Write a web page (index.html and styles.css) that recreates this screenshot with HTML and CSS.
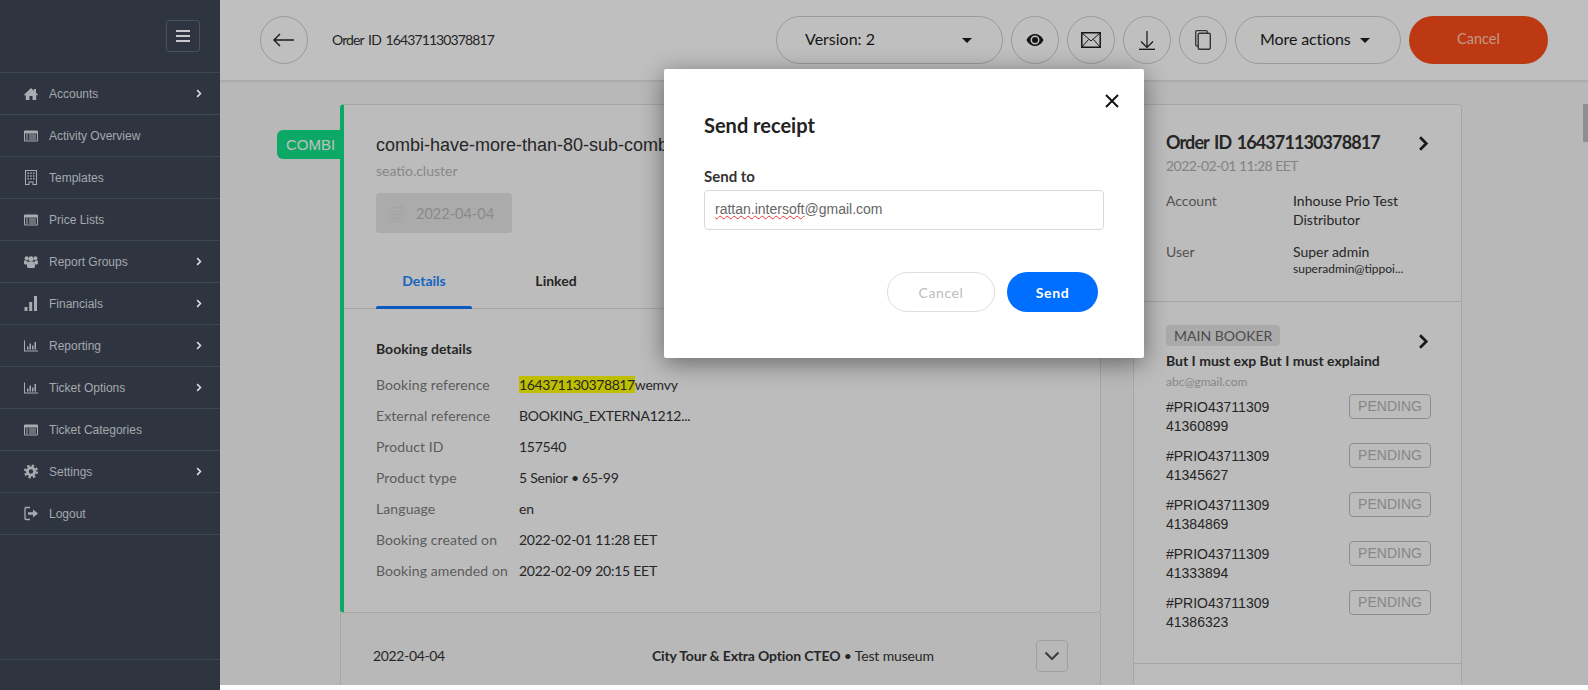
FILE: index.html
```html
<!DOCTYPE html>
<html lang="en">
<head>
  <meta charset="UTF-8" />
  <title>Order 164371130378817</title>
  <link rel="stylesheet" href="styles.css">
</head>
<body>
  <svg class="defs" width="0" height="0">
    <symbol id="i-list" viewBox="0 0 14 11"><path fill-rule="evenodd" d="M1 0h12a1 1 0 0 1 1 1v9a1 1 0 0 1-1 1H1a1 1 0 0 1-1-1V1a1 1 0 0 1 1-1zM1 3v7h12V3zM2 4h2v1H2zm3 0h7v1H5zM2 6h2v1H2zm3 0h7v1H5zM2 8h2v1H2zm3 0h7v1H5z"/></symbol>
    <symbol id="i-bars" viewBox="0 0 14 11"><path d="M0 0h1v10h13v1H0zM3 6h1.500v3H3zM5.500 3H7v6H5.500zM8 5h1.500v4H8zM10.500 1.500H12V9h-1.500z"/></symbol>
    <symbol id="i-chev" viewBox="0 0 8 12"><path d="M1.500 1.500 6 6l-4.500 4.500" fill="none" stroke="currentColor" stroke-width="2"/></symbol>
  </svg>

  <aside class="sidebar">
    <div class="side-top">
      <button class="burger"><span></span><span></span><span></span></button>
    </div>
    <nav class="side-nav">
      <a class="side-item"><svg class="side-icon" viewBox="0 0 14 12"><path d="M7 0l3 2.800V1h2v3.700l2 1.800-1 1-.8-.7V12H8.500V8h-3v4H1.800V7.100l-.8.700-1-1z"/></svg>Accounts<svg class="side-chev"><use href="#i-chev"/></svg></a>
      <a class="side-item"><svg class="side-icon"><use href="#i-list"/></svg>Activity Overview</a>
      <a class="side-item"><svg class="side-icon tall" viewBox="0 0 12 15"><path fill-rule="evenodd" d="M0 0h12v15H7.500v-2.500h-3V15H0zM1 1v13h2.500v-2.500h5V14H11V1zM2.500 2.500h1.500V4H2.500zm2.700 0h1.500V4H5.200zm2.800 0h1.500V4H8zM2.500 5.200h1.500v1.500H2.500zm2.700 0h1.500v1.500H5.200zm2.800 0h1.500v1.500H8zM2.500 8h1.500v1.500H2.500zM5.200 8h1.500v1.500H5.200zM8 8h1.500v1.500H8z"/></svg>Templates</a>
      <a class="side-item"><svg class="side-icon"><use href="#i-list"/></svg>Price Lists</a>
      <a class="side-item"><svg class="side-icon" viewBox="0 0 14 12"><circle cx="2.600" cy="2.200" r="2"/><circle cx="11.400" cy="2.200" r="2"/><circle cx="7" cy="2.800" r="2.600"/><path d="M0 4.600h2.800L4 6.500 3 8.500H.8L0 7.500zM14 4.600h-2.800L10 6.500l1 2h2.200l.8-1zM4.600 5.500h4.800L11 8v3l-1 1H4l-1-1V8z"/></svg>Report Groups<svg class="side-chev"><use href="#i-chev"/></svg></a>
      <a class="side-item"><svg class="side-icon tall" viewBox="0 0 13 15"><path d="M0 11h3v4H0zM4.700 6h3v9h-3zM9.500 0h3v15h-3z"/></svg>Financials<svg class="side-chev"><use href="#i-chev"/></svg></a>
      <a class="side-item"><svg class="side-icon"><use href="#i-bars"/></svg>Reporting<svg class="side-chev"><use href="#i-chev"/></svg></a>
      <a class="side-item"><svg class="side-icon"><use href="#i-bars"/></svg>Ticket Options<svg class="side-chev"><use href="#i-chev"/></svg></a>
      <a class="side-item"><svg class="side-icon"><use href="#i-list"/></svg>Ticket Categories</a>
      <a class="side-item"><svg class="side-icon tall" viewBox="0 0 14 14"><circle cx="7" cy="7" r="5"/><circle cx="7" cy="7" r="5.800" fill="none" stroke="currentColor" stroke-width="2.400" stroke-dasharray="2.400 2.150"/><circle class="gear-hole" cx="7" cy="7" r="2.200"/></svg>Settings<svg class="side-chev"><use href="#i-chev"/></svg></a>
      <a class="side-item"><svg class="side-icon tall" viewBox="0 0 14 14"><path d="M6 1H2a1 1 0 0 0-1 1v10a1 1 0 0 0 1 1h4" fill="none" stroke="currentColor" stroke-width="1.300"/><path d="M4 5.700h5V3l5 4-5 4V8.300H4z"/></svg>Logout</a>
    </nav>
    <div class="side-foot"></div>
  </aside>

  <main class="main">
    <header class="topbar">
      <button class="circle back"><svg width="22" height="14" viewBox="0 0 22 14"><path d="M7 1 1 7l6 6M1 7h20" fill="none" stroke="#222" stroke-width="1.400"/></svg></button>
      <span class="top-title">Order ID 164371130378817</span>
      <div class="top-actions">
        <button class="pill version"><span>Version: 2</span><i class="caret"></i></button>
        <button class="circle"><svg width="18" height="12" viewBox="0 0 18 12"><path fill-rule="evenodd" d="M9 0c3.800 0 6.800 2.500 8.500 6-1.700 3.500-4.700 6-8.500 6S2.200 9.500.5 6C2.200 2.500 5.200 0 9 0zm0 1.500a4.500 4.500 0 1 0 0 9 4.500 4.500 0 0 0 0-9z" fill="#1d1d1d"/><circle cx="9" cy="6" r="3" fill="#1d1d1d"/></svg></button>
        <button class="circle"><svg width="20" height="16" viewBox="0 0 20 16"><path d="M.8.800h18.400v14.400H.8z" fill="none" stroke="#1d1d1d" stroke-width="1.500"/><path d="M1 1l9 8 9-8M1 15l6.500-7.500M19 15l-6.500-7.500" fill="none" stroke="#1d1d1d" stroke-width="1"/></svg></button>
        <button class="circle"><svg width="16" height="19" viewBox="0 0 16 19"><path d="M8 0v16M2 10.500 8 16.500l6-6" fill="none" stroke="#1d1d1d" stroke-width="1.200"/><path d="M0 18.300h16" stroke="#1d1d1d" stroke-width="1.300"/></svg></button>
        <button class="circle"><svg width="16" height="20" viewBox="0 0 16 20"><path d="M3 16H2a1.300 1.300 0 0 1-1.300-1.300V2A1.300 1.300 0 0 1 2 .7h9A1.300 1.300 0 0 1 12.300 2v1" fill="none" stroke="#444" stroke-width="1.300"/><rect x="3.200" y="3.200" width="12.100" height="16.100" rx="1.500" fill="none" stroke="#444" stroke-width="1.400"/></svg></button>
        <button class="pill more"><span>More actions</span><i class="caret"></i></button>
        <button class="pill cancel-order"><span>Cancel</span></button>
      </div>
    </header>

    <div class="content">
      <section class="left-col">
        <span class="combi-tag">COMBI</span>
        <div class="booking-card">
          <div class="booking-head">
            <h2>combi-have-more-than-80-sub-combi-products</h2>
            <p class="supplier">seatio.cluster</p>
            <span class="date-chip"><svg width="16" height="17" viewBox="0 0 16 17"><path d="M1 2.500h14v14H1zM1 6h14M1 9.500h14M1 13h14M4.500 6v10M8 6v10M11.500 6v10M4 .5v3M12 .5v3" fill="none" stroke="#dcdcdc"/></svg>2022-04-04</span>
          </div>
          <div class="tabs">
            <span class="tab active">Details</span>
            <span class="tab">Linked</span>
          </div>
          <div class="details">
            <h3>Booking details</h3>
            <dl>
              <div class="row"><dt>Booking reference</dt><dd><mark>164371130378817</mark>wemvy</dd></div>
              <div class="row"><dt>External reference</dt><dd>BOOKING_EXTERNA1212...</dd></div>
              <div class="row"><dt>Product ID</dt><dd>157540</dd></div>
              <div class="row"><dt>Product type</dt><dd>5 Senior • 65-99</dd></div>
              <div class="row"><dt>Language</dt><dd>en</dd></div>
              <div class="row"><dt>Booking created on</dt><dd>2022-02-01 11:28 EET</dd></div>
              <div class="row"><dt>Booking amended on</dt><dd>2022-02-09 20:15 EET</dd></div>
            </dl>
          </div>
        </div>
        <div class="product-row">
          <span class="product-date">2022-04-04</span>
          <span class="product-name"><b>City Tour &amp; Extra Option CTEO</b> • Test museum</span>
          <button class="expand"><svg width="16" height="10" viewBox="0 0 16 10"><path d="M1.500 1.500 8 8l6.500-6.500" fill="none" stroke="#555" stroke-width="2.200"/></svg></button>
        </div>
      </section>

      <aside class="order-card">
        <div class="order-head">
          <div class="title-line"><h2>Order ID 164371130378817</h2><svg class="big-chev"><use href="#i-chev"/></svg></div>
          <p class="order-date">2022-02-01 11:28 EET</p>
          <div class="meta"><span class="meta-label">Account</span><span class="meta-val">Inhouse Prio Test Distributor</span></div>
          <div class="meta"><span class="meta-label">User</span><span class="meta-val">Super admin<small>superadmin@tippoi...</small></span></div>
        </div>
        <div class="booker">
          <div class="title-line"><span class="booker-tag">MAIN BOOKER</span><svg class="big-chev"><use href="#i-chev"/></svg></div>
          <p class="booker-name">But I must exp But I must explaind</p>
          <p class="booker-mail">abc@gmail.com</p>
          <div class="ticket"><span>#PRIO43711309<br>41360899</span><em>PENDING</em></div>
          <div class="ticket"><span>#PRIO43711309<br>41345627</span><em>PENDING</em></div>
          <div class="ticket"><span>#PRIO43711309<br>41384869</span><em>PENDING</em></div>
          <div class="ticket"><span>#PRIO43711309<br>41333894</span><em>PENDING</em></div>
          <div class="ticket"><span>#PRIO43711309<br>41386323</span><em>PENDING</em></div>
        </div>
      </aside>
    </div>

    <div class="backdrop"></div>
    <div class="thumb"></div>

    <div class="modal">
      <button class="modal-close"><svg width="14" height="14" viewBox="0 0 14 14"><path d="M1 1l12 12M13 1 1 13" stroke="#111" stroke-width="1.900"/></svg></button>
      <h2>Send receipt</h2>
      <label class="field-label">Send to</label>
      <div class="field"><span class="typo">rattan.intersoft</span>@gmail.com</div>
      <div class="modal-actions">
        <button class="btn-ghost">Cancel</button>
        <button class="btn-send">Send</button>
      </div>
    </div>
  </main>
</body>
</html>
```

FILE: styles.css
```css
* { box-sizing: border-box; }
html, body { height: 100%; }
body {
  margin: 0;
  display: flex;
  overflow: hidden;
  background: #fff;
  font-family: "Lato", "Liberation Sans", sans-serif;
  font-size: 14px;
  color: #333;
}
button { font-family: inherit; cursor: pointer; background: none; padding: 0; }
h2, h3, p, dl, dd { margin: 0; }
.defs { position: absolute; }

/* sidebar */
.sidebar {
  width: 220px;
  height: 690px;
  flex: none;
  display: flex;
  flex-direction: column;
  background: #2e3541;
  color: #a5a8ad;
}
.side-top {
  height: 73px;
  padding: 20px 20px 0 0;
  display: flex;
  justify-content: flex-end;
  align-items: flex-start;
  border-bottom: 1px solid #414855;
}
.burger {
  width: 34px;
  height: 32px;
  border: 1px solid #495060;
  border-radius: 3px;
  display: flex;
  flex-direction: column;
  align-items: center;
  justify-content: center;
  gap: 3px;
}
.burger span { width: 14px; height: 2px; background: #c6c8cc; }
.side-item {
  height: 42px;
  display: flex;
  align-items: center;
  padding-left: 24px;
  border-bottom: 1px solid #414855;
  font-family: "Liberation Sans", sans-serif;
  font-size: 12px;
  position: relative;
}
.side-icon {
  width: 14px;
  height: 12px;
  margin-right: 11px;
  fill: #a8abb0;
  color: #a8abb0;
  flex: none;
}
.side-icon.tall { height: 15px; }
.gear-hole { fill: #2e3541; }
.side-chev {
  position: absolute;
  left: 196px;
  top: 16px;
  width: 6px;
  height: 9px;
  color: #dfe0e2;
}
.side-foot {
  margin-top: auto;
  height: 31px;
  border-top: 1px solid #414855;
}

/* main column */
.main {
  flex: 1;
  height: 685px;
  position: relative;
  overflow: hidden;
  background: #f6f6f6;
}
.backdrop {
  position: absolute;
  inset: 0;
  background: rgba(0, 0, 0, .25);
}
.thumb {
  position: absolute;
  right: 0;
  top: 104px;
  width: 5px;
  height: 38px;
  background: #8f8f8f;
}
.topbar {
  height: 80px;
  padding: 0 40px;
  display: flex;
  align-items: center;
  background: #fff;
  box-shadow: 0 1px 3px rgba(0, 0, 0, .12);
}
.circle {
  width: 48px;
  height: 48px;
  flex: none;
  border: 1px solid #cfcfcf;
  border-radius: 50%;
  display: flex;
  align-items: center;
  justify-content: center;
}
.back { margin-right: 24px; }
.top-title { font-size: 14px; letter-spacing: -.9px; word-spacing: 2px; margin-top: -2px; }
.top-actions { margin-left: auto; display: flex; align-items: center; gap: 8px; }
.pill {
  height: 48px;
  border: 1px solid #cfcfcf;
  border-radius: 24px;
  font-size: 16px;
  color: #1d1d1d;
  display: flex;
  align-items: center;
}
.pill span { margin-top: -3px; }
.version { width: 227px; padding: 0 30px 0 28px; justify-content: space-between; }
.more { width: 166px; padding: 0 30px 0 24px; justify-content: space-between; letter-spacing: -.1px; }
.cancel-order {
  width: 139px;
  justify-content: center;
  border: 0;
  background: #fc4d1b;
  color: #ffcdb1;
  font-size: 14.500px;
}
.caret {
  width: 0;
  height: 0;
  border-left: 5px solid transparent;
  border-right: 5px solid transparent;
  border-top: 5px solid #1d1d1d;
}

/* content */
.content {
  display: flex;
  align-items: flex-start;
  gap: 32px;
  padding: 24px 0 0 120px;
}
.left-col { width: 761px; flex: none; position: relative; }
.combi-tag {
  position: absolute;
  left: -63px;
  top: 26px;
  width: 63px;
  height: 29px;
  padding-left: 9px;
  line-height: 29px;
  background: #10e087;
  border-radius: 6px 0 0 6px;
  color: #fff;
  font-family: "Liberation Sans", sans-serif;
  font-size: 15px;
}
.booking-card {
  height: 509px;
  background: #fbfbfb;
  border: 1px solid #dedede;
  border-left: 4px solid #10e087;
  border-radius: 4px;
}
.booking-head { padding: 29px 0 0 32px; height: 203px; }
.booking-head h2 {
  font-family: "Liberation Sans", sans-serif;
  font-size: 18px;
  font-weight: 400;
  line-height: 22px;
  white-space: nowrap;
  overflow: hidden;
}
.supplier { margin-top: 5px; line-height: 20px; color: #b5b5b5; font-size: 14px; }
.date-chip {
  margin-top: 12px;
  width: 136px;
  height: 40px;
  display: flex;
  align-items: center;
  gap: 11px;
  padding-left: 13px;
  background: #e5e5e5;
  border-radius: 4px;
  color: #b8b8b8;
  font-size: 14.500px;
}
.tabs {
  height: 0;
  display: flex;
  padding-left: 32px;
}
.tab {
  width: 96px;
  height: 0;
  margin-right: 36px;
  text-align: center;
  font-weight: 700;
  font-size: 14px;
  line-height: 0;
  position: relative;
  top: -27px;
}
.tab.active { color: #2288ff; }
.details {
  border-top: 1px solid #dedede;
  padding: 31px 0 0 32px;
  position: relative;
}
.details::before {
  content: "";
  position: absolute;
  left: 32px;
  top: -3px;
  width: 96px;
  height: 3px;
  background: #0e78ff;
  border-radius: 2px 2px 0 0;
}
.details h3 { font-size: 14px; line-height: 18px; font-weight: 700; margin-bottom: 11px; }
.row { height: 31px; display: flex; align-items: center; }
.row dt { width: 143px; color: #7b7b7b; letter-spacing: .1px; }
.row dd { letter-spacing: -.25px; }
mark { background: #ffff00; color: inherit; letter-spacing: -.4px; }
.product-row {
  height: 90px;
  display: flex;
  align-items: center;
  padding: 0 32px;
  background: #f6f6f6;
  border-left: 1px solid #dedede;
  border-right: 1px solid #dedede;
}
.product-date { width: 279px; font-size: 14px; letter-spacing: -.35px; margin-top: -6px; }
.product-name { flex: 1; margin-top: -6px; letter-spacing: -.15px; }
.expand {
  width: 32px;
  height: 32px;
  margin-top: -4px;
  border: 1px solid #d6d6d6;
  border-radius: 4px;
  display: flex;
  align-items: center;
  justify-content: center;
}

/* right card */
.order-card {
  width: 329px;
  flex: none;
  background: #fbfbfb;
  border: 1px solid #dedede;
  border-radius: 4px 4px 0 0;
  height: 600px;
}
.order-head { height: 197px; padding: 25px 32px 0; border-bottom: 1px solid #dedede; }
.title-line { display: flex; justify-content: space-between; align-items: center; }
.order-head h2 { font-size: 18px; font-weight: 700; line-height: 24px; white-space: nowrap; letter-spacing: -.9px; word-spacing: 2px; }
.big-chev { width: 11px; height: 17px; color: #222; flex: none; margin-top: 2px; }
.order-date { margin-top: 3px; margin-bottom: 16px; line-height: 18px; color: #b0b0b0; letter-spacing: -.55px; }
.meta { display: flex; margin-bottom: 13px; }
.meta-label { width: 127px; color: #6f6f6f; line-height: 19px; flex: none; }
.meta-val { line-height: 19px; }
.meta-val small { display: block; font-size: 12px; line-height: 15px; }
.booker { height: 362px; padding: 19px 30px 0 32px; border-bottom: 1px solid #dedede; }
.booker-tag {
  height: 21px;
  line-height: 21px;
  padding: 0 8px;
  background: #e3e3e3;
  border-radius: 4px;
  color: #666;
  font-size: 14px;
}
.booker .big-chev { margin-top: 12px; margin-right: 2px; }
.booker-name { margin-top: 1px; font-weight: 700; line-height: 20px; white-space: nowrap; }
.booker-mail { margin-top: 2px; font-size: 12px; line-height: 17px; color: #b5b5b5; }
.ticket {
  height: 49px;
  display: flex;
  justify-content: space-between;
  font-family: "Liberation Sans", sans-serif;
  line-height: 19px;
  padding-top: 2px;
}
.booker-mail + .ticket { margin-top: 6px; }
.ticket em {
  width: 82px;
  height: 25px;
  margin-top: -4px;
  line-height: 23px;
  text-align: center;
  font-style: normal;
  border: 1px solid #bdbdbd;
  border-radius: 4px;
  color: #b5b5b5;
}

/* modal */
.modal {
  position: absolute;
  left: 444px;
  top: 69px;
  width: 480px;
  height: 289px;
  padding: 44px 40px 0;
  background: #fff;
  border-radius: 2px;
  box-shadow: 0 5px 24px rgba(0, 0, 0, .45);
}
.modal-close { position: absolute; right: 25px; top: 25px; border: 0; display: flex; }
.modal h2 { font-size: 20px; font-weight: 700; line-height: 24px; color: #222; }
.field-label { display: block; margin-top: 29px; font-size: 15px; font-weight: 700; line-height: 20px; }
.field {
  margin-top: 4px;
  width: 400px;
  height: 40px;
  padding-left: 10px;
  line-height: 37px;
  border: 1px solid #d9d9d9;
  border-radius: 4px;
  font-family: "Liberation Sans", sans-serif;
  font-size: 14px;
  color: #666;
}
.typo { text-decoration: underline wavy #e33; text-decoration-thickness: 1px; }
.modal-actions {
  margin-top: 42px;
  padding-right: 6px;
  display: flex;
  justify-content: flex-end;
  gap: 12px;
}
.modal-actions button { height: 40px; border-radius: 20px; font-size: 14px; letter-spacing: .6px; }
.btn-ghost { width: 108px; border: 1px solid #ddd; color: #bdbdbd; }
.btn-send { width: 91px; border: 0; background: #006fff; color: #fff; font-weight: 700; }
```
